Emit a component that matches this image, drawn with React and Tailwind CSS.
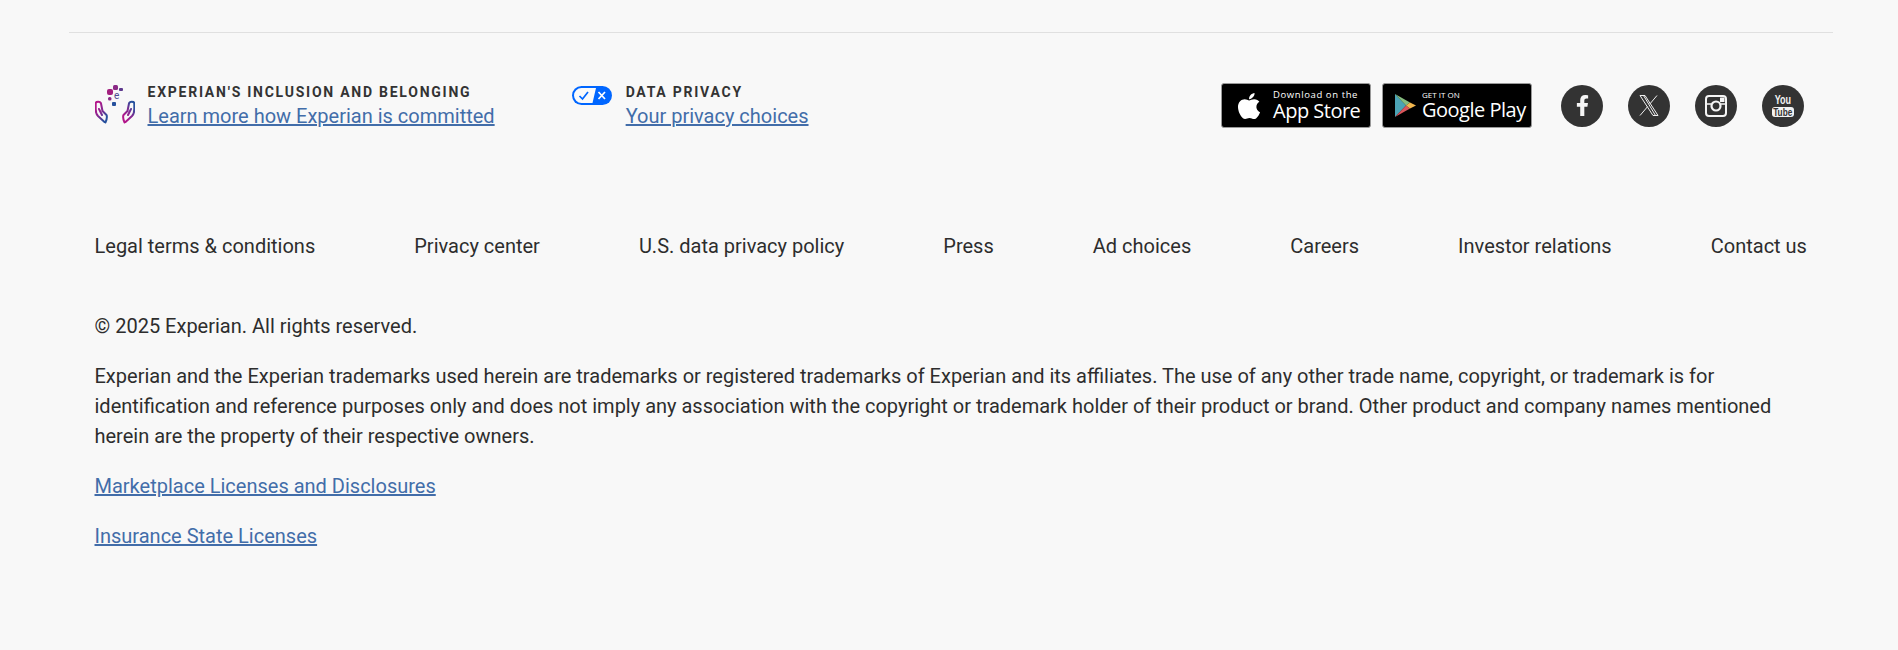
import { FaFacebookF, FaApple } from 'react-icons/fa';

const footerLinks = [
  'Legal terms & conditions',
  'Privacy center',
  'U.S. data privacy policy',
  'Press',
  'Ad choices',
  'Careers',
  'Investor relations',
  'Contact us',
];

const linkClass = 'text-[#426da9] underline';

const InclusionIcon = () => (
  <svg width="40" height="40" viewBox="0 0 40 40" fill="none" className="shrink-0">
    <defs>
      <linearGradient id="handLeft" gradientUnits="userSpaceOnUse" x1="0" y1="24" x2="12" y2="32">
        <stop offset="0" stopColor="#b3168a" />
        <stop offset="0.55" stopColor="#7d2c92" />
        <stop offset="1" stopColor="#26519d" />
      </linearGradient>
      <linearGradient id="handRight" gradientUnits="userSpaceOnUse" x1="28" y1="32" x2="40" y2="24">
        <stop offset="0" stopColor="#b3168a" />
        <stop offset="0.55" stopColor="#7d2c92" />
        <stop offset="1" stopColor="#26519d" />
      </linearGradient>
    </defs>
    <rect x="12" y="5" width="6" height="6" rx="2" fill="#a3207f" />
    <rect x="18" y="1" width="5" height="5" rx="1.5" fill="#8b2a86" />
    <rect x="24" y="4" width="4" height="3" rx="1" fill="#5e3a8e" />
    <rect x="13" y="13" width="3.5" height="3.5" rx="1.5" fill="#8b2a86" />
    <rect x="17" y="18" width="4" height="4" rx="1" fill="#26519d" />
    <text x="19" y="15" fontSize="10" fontFamily="Roboto, sans-serif" fill="#4f4a90">e</text>
    <path d="M9.5 38 L3 32 C1 30 0.7 28 0.7 25 V19.5 C0.7 17 5.5 17 6 19.5 L7.5 27 L11.5 31 C12.5 33 11.5 36 10.5 38.5 M4 25 L7 31" stroke="url(#handLeft)" strokeWidth="2" strokeLinecap="round" strokeLinejoin="round" />
    <path d="M30.5 38 L37 32 C39 30 39.3 28 39.3 25 V19.5 C39.3 17 34.5 17 34 19.5 L32.5 27 L28.5 31 C27.5 33 28.5 36 29.5 38.5 M36 25 L33 31" stroke="url(#handRight)" strokeWidth="2" strokeLinecap="round" strokeLinejoin="round" />
  </svg>
);

const PrivacyIcon = () => (
  <svg width="40" height="19" viewBox="0 0 40 19" className="shrink-0">
    <rect width="40" height="19" rx="9.5" fill="#0066ff" />
    <path d="M9.5 2 H24 L20.5 17 H9.5 A7.5 7.5 0 0 1 9.5 2 Z" fill="#fafafa" />
    <path d="M7.5 10 L10.5 13 L16 6" stroke="#0066ff" strokeWidth="1.7" fill="none" />
    <path d="M26.5 6 L33 13 M33 6 L26.5 13" stroke="#fff" strokeWidth="1.7" />
  </svg>
);

const GooglePlayIcon = () => (
  <svg width="21" height="23" viewBox="0 0 21 23" className="shrink-0">
    <path d="M0 0 L11 11.5 L0 23 Z" fill="#4ba3b5" />
    <path d="M0 0 L15 8.5 L11 11.5 Z" fill="#86bd7f" />
    <path d="M0 23 L15 14.5 L11 11.5 Z" fill="#d9555b" />
    <path d="M15 8.5 L21 11.5 L15 14.5 L11 11.5 Z" fill="#f2b64e" />
  </svg>
);

const XIcon = () => (
  <svg width="20" height="21" viewBox="0 0 20 21" fill="none" stroke="#f0f0f0" strokeWidth="1">
    <path d="M1 0.5 H6 L19 20.5 H14 Z" />
    <path d="M3.5 0.5 H4.5 L16.5 20.5 M18 0.5 L10.8 9 M8.7 11.5 L1 20.5" />
  </svg>
);

const InstagramIcon = () => (
  <svg width="22" height="22" viewBox="0 0 22 22" fill="none">
    <rect x="1" y="1" width="20" height="20" rx="3" stroke="#f5f5f5" strokeWidth="2" />
    <path d="M1 9 H6 M16 9 H21" stroke="#f5f5f5" strokeWidth="1.5" />
    <circle cx="11" cy="11" r="4.5" stroke="#f5f5f5" strokeWidth="2.2" />
    <rect x="15" y="2.5" width="4.5" height="4.5" rx="0.5" fill="#f5f5f5" />
  </svg>
);

const YoutubeIcon = () => (
  <div className="flex flex-col items-center font-['Liberation_Sans',sans-serif] font-bold text-[#f2f2f2]">
    <span className="scale-x-75 text-[12px] leading-[11px]">You</span>
    <span className="mt-[1px] flex h-[10px] w-[22px] items-center justify-center rounded-[3px] bg-[#f2f2f2] text-[#333]">
      <span className="scale-x-75 text-[11px] leading-[10px]">Tube</span>
    </span>
  </div>
);

const Social = ({ children }) => (
  <a className="flex h-[42px] w-[42px] items-center justify-center rounded-full bg-[#333] text-[#f5f5f5]">
    {children}
  </a>
);

export default function App() {
  return (
    <div className="min-h-[650px] bg-[#f8f8f8] pl-[69px] pr-[65px] pt-[32px] font-['Roboto',sans-serif] text-[20px] leading-[30px] text-[#2d2d2d]">
      <footer className="border-t border-[#e0e0e0] pl-[25.5px] pr-[26px]">
        <div className="flex items-start pt-[50px]">
          <div className="flex items-start gap-[13px]">
            <div className="pt-[1px]"><InclusionIcon /></div>
            <div>
              <div className="text-[14px] font-bold leading-[18px] tracking-[1.75px] text-[#333]">EXPERIAN'S INCLUSION AND BELONGING</div>
              <a className={`block ${linkClass}`}>Learn more how Experian is committed</a>
            </div>
          </div>
          <div className="ml-[77px] flex items-start gap-[14px]">
            <div className="pt-[3px]"><PrivacyIcon /></div>
            <div>
              <div className="text-[14px] font-bold leading-[18px] tracking-[1.75px] text-[#333]">DATA PRIVACY</div>
              <a className={`block ${linkClass}`}>Your privacy choices</a>
            </div>
          </div>
          <div className="ml-auto mr-[3px] flex items-center">
            <div className="mr-[11px] flex h-[45px] w-[150px] items-center gap-[9px] rounded-[3px] border border-[#999] bg-black pl-[12px] text-white">
              <FaApple size={30} className="shrink-0" />
              <div className="font-['Open_Sans',sans-serif] whitespace-nowrap">
                <div className="text-[9.5px] leading-[11px] tracking-[0.6px]">Download on the</div>
                <div className="text-[20px] leading-[22px] tracking-[-0.5px]">App Store</div>
              </div>
            </div>
            <div className="mr-[29px] flex h-[45px] w-[150px] items-center gap-[6px] rounded-[3px] border border-[#999] bg-black pl-[12px] text-white">
              <GooglePlayIcon />
              <div className="font-['Open_Sans',sans-serif] whitespace-nowrap">
                <div className="text-[8px] leading-[9px]">GET IT ON</div>
                <div className="text-[20px] leading-[22px] tracking-[-0.5px]">Google Play</div>
              </div>
            </div>
            <div className="flex gap-[25px]">
              <Social><FaFacebookF size={21} /></Social>
              <Social><XIcon /></Social>
              <Social><InstagramIcon /></Social>
              <Social><YoutubeIcon /></Social>
            </div>
          </div>
        </div>

        <nav className="mt-[100px] flex justify-between">
          {footerLinks.map((label) => (
            <a key={label}>{label}</a>
          ))}
        </nav>

        <p className="mt-[50px]">© 2025 Experian. All rights reserved.</p>
        <p className="mt-[20px]">
          Experian and the Experian trademarks used herein are trademarks or registered trademarks of Experian and its affiliates. The use of any other trade name, copyright, or trademark is for identification and reference purposes only and does not imply any association with the copyright or trademark holder of their product or brand. Other product and company names mentioned herein are the property of their respective owners.
        </p>
        <p className="mt-[20px]"><a className={linkClass}>Marketplace Licenses and Disclosures</a></p>
        <p className="mt-[20px]"><a className={linkClass}>Insurance State Licenses</a></p>
      </footer>
    </div>
  );
}
